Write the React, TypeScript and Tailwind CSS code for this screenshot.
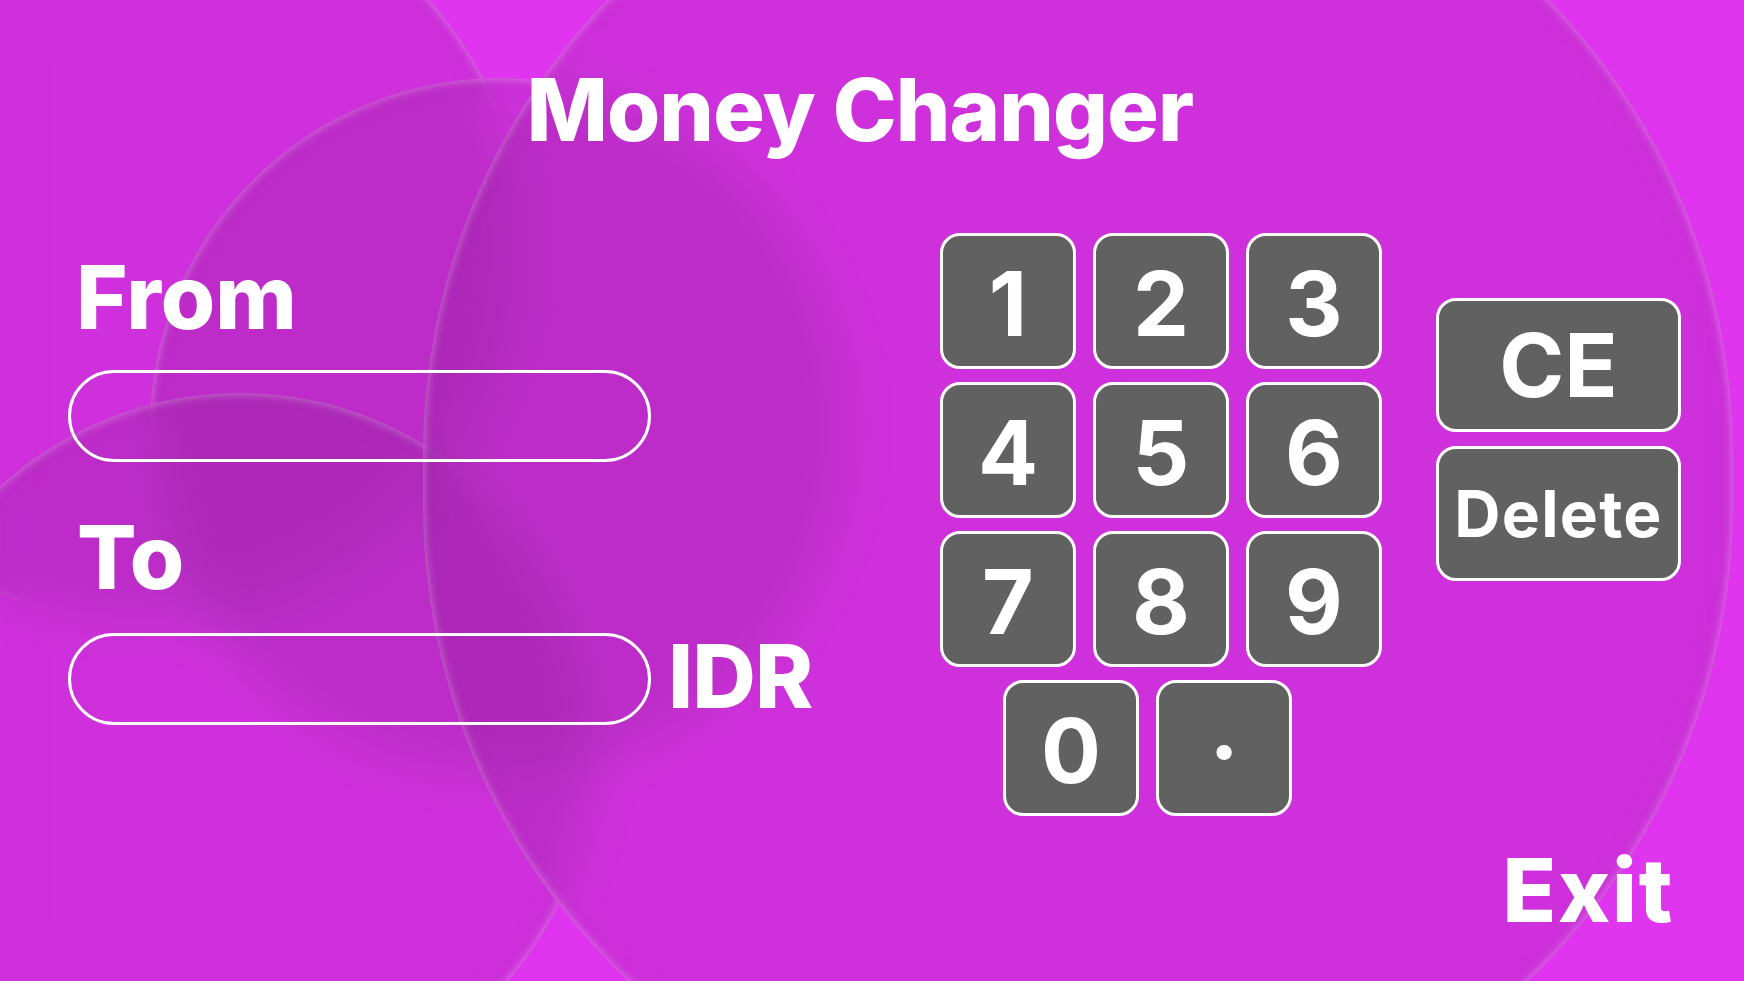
import React from "react";

const bubble =
  "absolute rounded-full bg-black/[0.08] backdrop-blur-[24px] shadow-[inset_0_0_8px_1px_rgba(255,255,255,0.34),inset_0_0_40px_4px_rgba(80,0,90,0.06)]";

const keyCls =
  "w-[136px] h-[136px] rounded-[20px] border-[3px] border-white bg-[#616161] flex items-center justify-center text-[89px] font-bold leading-none text-white";

function Key({ label }: { label: string }) {
  return (
    <button type="button" className={keyCls}>
      <span className="pt-[4px]">{label}</span>
    </button>
  );
}

export default function App() {
  return (
    <div className="relative w-full h-[981px] overflow-hidden bg-[#e035ee] font-['Inter','Noto_Sans',sans-serif] text-white">
      {/* decorative bubbles */}
      <div className="absolute inset-0">
        <div className={`${bubble} left-[-225px] top-[-125px] w-[750px] h-[750px]`} />
        <div className={`${bubble} left-[150px] top-[78px] w-[700px] h-[700px]`} />
        <div className={`${bubble} left-[-115px] top-[393px] w-[710px] h-[710px]`} />
        <div className={`${bubble} left-[423px] top-[-200px] w-[1310px] h-[1360px]`} />
      </div>

      <div className="relative flex flex-col h-full">
        <h1 className="pt-[67px] pr-[24px] text-center text-[86px] leading-none font-extrabold tracking-[-0.01em]">
          Money Changer
        </h1>

        <div className="mt-[80px] flex items-start pl-[68px]">
          {/* left column */}
          <div className="w-[872px] mt-[20px] flex flex-col items-start">
            <div className="pl-[8px] text-[88px] leading-none font-extrabold">From</div>
            <div className="mt-[29px] w-[583px] h-[92px] rounded-full border-[3px] border-white" />
            <div className="mt-[51px] pl-[9px] text-[88px] leading-none font-extrabold">To</div>
            <div className="mt-[31px] flex items-center">
              <div className="w-[583px] h-[92px] rounded-full border-[3px] border-white" />
              <div className="ml-[17px] mb-[5px] text-[88px] leading-none font-extrabold tracking-[-0.01em]">IDR</div>
            </div>
          </div>

          {/* keypad */}
          <div className="w-[442px] flex flex-col">
            <div className="grid grid-cols-3 gap-x-[17px] gap-y-[13px]">
              {["1", "2", "3", "4", "5", "6", "7", "8", "9"].map((d) => (
                <Key key={d} label={d} />
              ))}
            </div>
            <div className="mt-[13px] ml-[63px] flex gap-[17px]">
              <Key label="0" />
              <Key label="·" />
            </div>
          </div>

          {/* side actions */}
          <div className="ml-[54px] mt-[65px] w-[245px] flex flex-col gap-[14px]">
            <button
              type="button"
              className="h-[134px] rounded-[20px] border-[3px] border-white bg-[#616161] flex items-center justify-center text-[88px] font-bold leading-none"
            >
              CE
            </button>
            <button
              type="button"
              className="h-[135px] rounded-[20px] border-[3px] border-white bg-[#616161] flex items-center justify-center text-[64px] font-bold leading-none tracking-[0.02em]"
            >
              Delete
            </button>
          </div>
        </div>

        <div className="mt-[30px] flex justify-end pr-[70px]">
          <span className="text-[88px] leading-none font-extrabold tracking-[0.02em]">Exit</span>
        </div>
      </div>
    </div>
  );
}
